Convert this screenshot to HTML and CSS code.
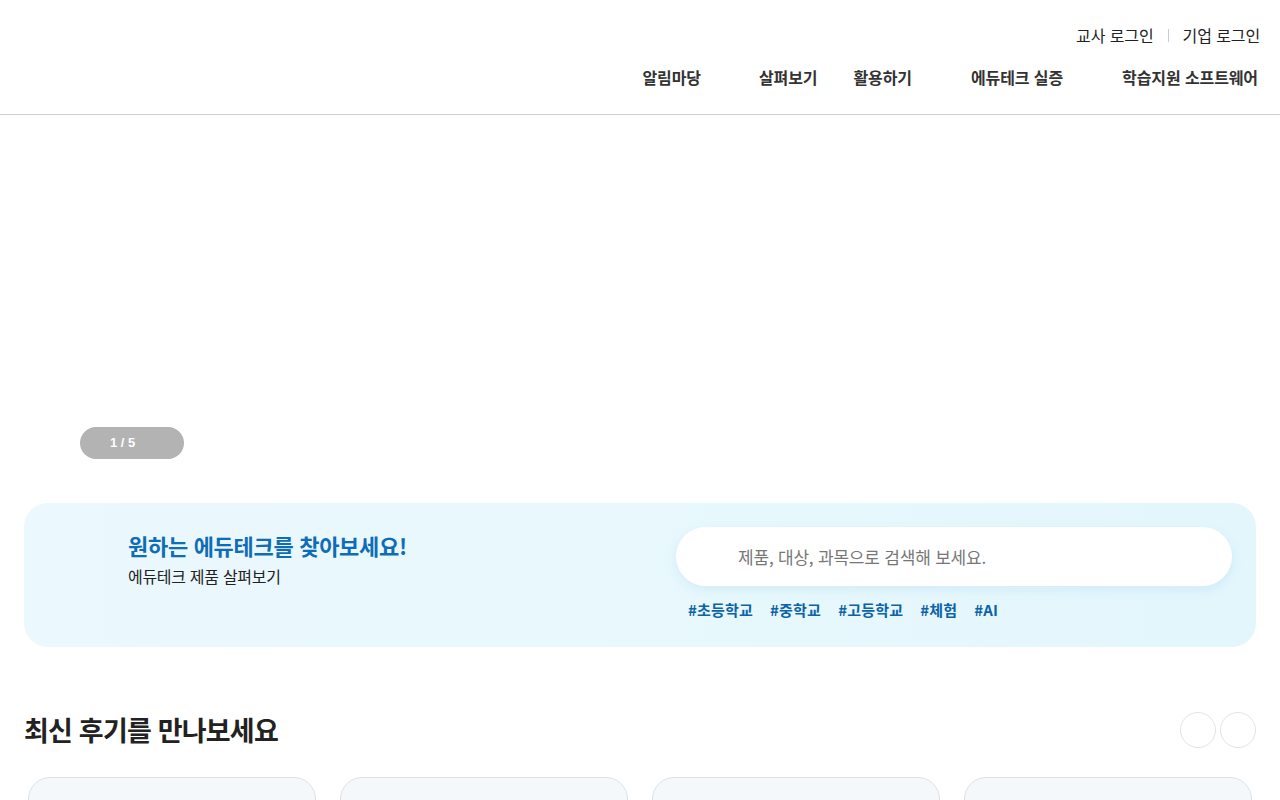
FILE: index.html
```html
<!DOCTYPE html>
<html lang="ko">
<head>
<meta charset="utf-8">
<title>에듀테크</title>
<link rel="stylesheet" href="styles.css">
</head>
<body>
<header class="header">
  <div class="util">
    <a class="util-link">교사 로그인</a>
    <span class="util-sep"></span>
    <a class="util-link">기업 로그인</a>
  </div>
  <nav class="gnb">
    <a class="gnb-item gnb-1">알림마당</a>
    <a class="gnb-item gnb-2">살펴보기</a>
    <a class="gnb-item gnb-3">활용하기</a>
    <a class="gnb-item gnb-4">에듀테크 실증</a>
    <a class="gnb-item gnb-5">학습지원 소프트웨어</a>
  </nav>
</header>
<main>
  <section class="hero">
    <div class="pager">1 / 5</div>
  </section>
  <section class="search-box">
    <div class="search-text">
      <h2 class="search-title">원하는 에듀테크를 찾아보세요!</h2>
      <p class="search-sub">에듀테크 제품 살펴보기</p>
    </div>
    <div class="search-right">
      <div class="search-input">제품, 대상, 과목으로 검색해 보세요.</div>
      <div class="tags">
        <span class="tag">#초등학교</span>
        <span class="tag">#중학교</span>
        <span class="tag">#고등학교</span>
        <span class="tag">#체험</span>
        <span class="tag">#AI</span>
      </div>
    </div>
  </section>
  <section class="reviews">
    <div class="reviews-head">
      <h2 class="reviews-title">최신 후기를 만나보세요</h2>
      <div class="arrows">
        <button class="arrow"></button>
        <button class="arrow"></button>
      </div>
    </div>
    <div class="cards">
      <div class="card"></div>
      <div class="card"></div>
      <div class="card"></div>
      <div class="card"></div>
    </div>
  </section>
</main>
</body>
</html>
```

FILE: styles.css
```css
* { box-sizing: border-box; }
html, body { margin: 0; padding: 0; }
body {
  font-family: "Noto Sans CJK KR", "Noto Sans", sans-serif;
  color: #222;
  background: #fff;
  overflow: hidden;
}
a { color: inherit; text-decoration: none; }

.header {
  height: 115px;
  border-bottom: 1px solid #cfcfcf;
  padding: 0 20px 0 0;
  display: flex;
  flex-direction: column;
  align-items: flex-end;
}
.util {
  display: flex;
  align-items: center;
  margin-top: 24px;
  height: 22px;
  font-size: 16px;
  color: #222;
  letter-spacing: -0.1px;
}
.util-sep {
  width: 1px;
  height: 13px;
  background: #ccc;
  margin: 0 14px;
}
.gnb {
  display: flex;
  margin-top: 19px;
  height: 24px;
  align-items: center;
  padding-right: 2px;
}
.gnb-item {
  font-size: 16px;
  font-weight: 700;
  color: #333;
  letter-spacing: -0.1px;
}
.gnb-2 { margin-left: 58px; }
.gnb-3 { margin-left: 36px; }
.gnb-4 { margin-left: 59px; }
.gnb-5 { margin-left: 59px; }

.hero {
  height: 388px;
  display: flex;
  align-items: flex-end;
  padding: 0 0 44px 80px;
}
.pager {
  width: 104px;
  height: 32px;
  border-radius: 16px;
  background: #b3b3b3;
  color: #fff;
  font-family: "Liberation Sans", Arial, sans-serif;
  font-weight: 700;
  font-size: 13px;
  line-height: 32px;
  padding-left: 30px;
}

.search-box {
  margin: 0 24px;
  height: 144px;
  border-radius: 24px;
  background: linear-gradient(90deg, #ebf8fd 0%, #e7f8fd 60%, #e3f6fc 100%);
  display: flex;
  justify-content: space-between;
  padding: 24px 24px 0 104px;
}
.search-title {
  margin: 0;
  font-size: 22px;
  font-weight: 700;
  color: #0f6cb6;
  letter-spacing: -0.3px;
  line-height: 36px;
}
.search-sub {
  margin: 2px 0 0;
  font-size: 16px;
  color: #222;
  line-height: 22px;
  letter-spacing: -0.3px;
}
.search-right {
  width: 556px;
}
.search-input {
  height: 59px;
  border-radius: 30px;
  background: #fff;
  box-shadow: 0 4px 12px rgba(120, 190, 220, 0.18);
  padding-left: 62px;
  line-height: 59px;
  font-size: 17px;
  color: #777;
  letter-spacing: -0.2px;
}
.tags {
  display: flex;
  gap: 17px;
  margin-top: 12px;
  padding-left: 12px;
}
.tag {
  font-size: 15px;
  font-weight: 700;
  color: #0c63a8;
  letter-spacing: 0.2px;
  line-height: 24px;
}

.reviews {
  padding: 0 24px;
}
.reviews-head {
  display: flex;
  justify-content: space-between;
  align-items: center;
  margin-top: 64px;
  height: 38px;
}
.reviews-title {
  margin: 0;
  font-size: 27px;
  font-weight: 700;
  color: #222;
  letter-spacing: -0.8px;
  line-height: 38px;
}
.arrows {
  display: flex;
  gap: 4px;
}
.arrow {
  width: 36px;
  height: 36px;
  border-radius: 50%;
  border: 1px solid #e3e3e3;
  background: #fff;
  padding: 0;
}
.cards {
  display: grid;
  grid-template-columns: repeat(4, 288px);
  gap: 24px;
  margin-top: 28px;
  padding-left: 4px;
}
.card {
  height: 120px;
  border: 1px solid #dbe2e8;
  border-radius: 22px;
  background: #f4f8fb;
}
```
